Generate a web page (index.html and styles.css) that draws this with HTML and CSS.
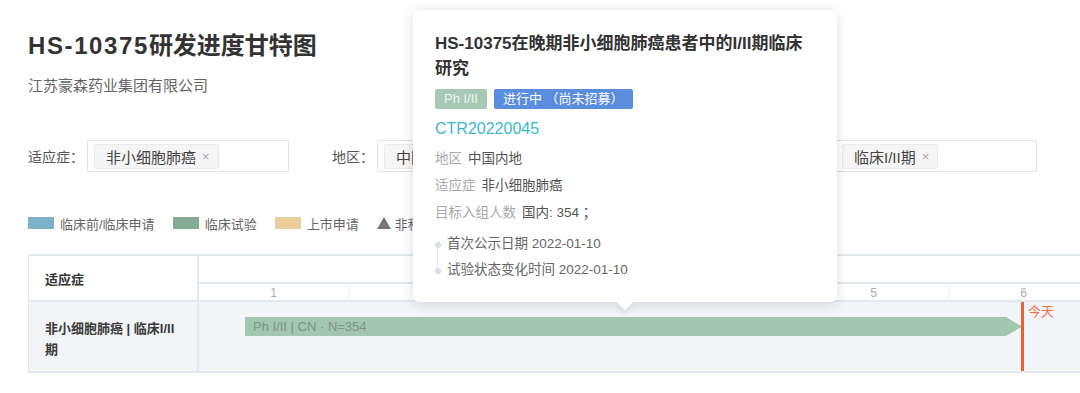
FILE: index.html
```html
<!DOCTYPE html>
<html lang="zh">
<head>
<meta charset="utf-8">
<link rel="stylesheet" href="styles.css">
</head>
<body>
<div class="page">
  <h1 class="title"><span class="latin">HS-10375</span>研发进度甘特图</h1>
  <div class="subtitle">江苏豪森药业集团有限公司</div>

  <div class="filters">
    <div class="fgroup">
      <span class="flabel">适应症：</span>
      <div class="fbox w1"><span class="tag">非小细胞肺癌<i class="x">×</i></span></div>
    </div>
    <div class="fgroup">
      <span class="flabel">地区：</span>
      <div class="fbox w2"><span class="tag">中国内地<i class="x">×</i></span></div>
    </div>
    <div class="fgroup">
      <span class="flabel">研发阶段：</span>
      <div class="fbox w1"><span class="tag">临床I/II期<i class="x">×</i></span></div>
    </div>
  </div>

  <div class="legend">
    <span class="litem"><i class="sw blue"></i>临床前/临床申请</span>
    <span class="litem"><i class="sw green"></i>临床试验</span>
    <span class="litem"><i class="sw tan"></i>上市申请</span>
    <span class="litem"><i class="tri"></i>非积极状态</span>
  </div>

  <div class="gantt">
    <div class="ghead">
      <div class="gleft hcell">适应症</div>
      <div class="gright">
        <div class="yearrow"></div>
        <div class="monthrow">
          <span class="m">1</span><span class="m">2</span><span class="m">3</span><span class="m">4</span><span class="m">5</span><span class="m">6</span><span class="m"></span>
        </div>
      </div>
    </div>
    <div class="gbody">
      <div class="gleft bcell">非小细胞肺癌 | 临床I/II期</div>
      <div class="gright track">
        <div class="bar" style="left:46px;width:777px;"><span class="bartext">Ph I/II | CN · N=354</span></div>
        <div class="today" style="left:822px;"><span class="todaytext">今天</span></div>
      </div>
    </div>
  </div>

  <div class="tooltip">
    <div class="tt-title">HS-10375在晚期非小细胞肺癌患者中的I/II期临床研究</div>
    <div class="tt-tags">
      <span class="ttag phase">Ph I/II</span>
      <span class="ttag status">进行中 （尚未招募）</span>
    </div>
    <div class="tt-id">CTR20220045</div>
    <div class="tt-row"><span class="k">地区</span><span class="v">中国内地</span></div>
    <div class="tt-row"><span class="k">适应症</span><span class="v">非小细胞肺癌</span></div>
    <div class="tt-row"><span class="k">目标入组人数</span><span class="v">国内: 354 ；</span></div>
    <div class="tt-timeline">
      <div class="tl-item first">首次公示日期 2022-01-10</div>
      <div class="tl-item">试验状态变化时间 2022-01-10</div>
    </div>
  </div>
</div>
</body>
</html>
```

FILE: styles.css
```css
* { box-sizing: border-box; }
html, body { margin: 0; padding: 0; background: #fff; }
body {
  font-family: "Liberation Sans", "Noto Sans CJK SC", sans-serif;
  color: #333;
  width: 1080px;
  height: 393px;
  overflow: hidden;
}
.page {
  position: relative;
  padding: 30px 0 0 28px;
}
.title {
  margin: 0;
  font-size: 24px;
  line-height: 32px;
  font-weight: 700;
  color: #333;
}
.latin { letter-spacing: 1.6px; }
.subtitle {
  margin-top: 14px;
  font-size: 15px;
  line-height: 20px;
  color: #666;
}
.filters {
  display: flex;
  align-items: center;
  margin-top: 44px;
  height: 32px;
}
.fgroup { display: flex; align-items: center; margin-right: 43px; }
.flabel { font-size: 14px; color: #555; margin-right: 3px; white-space: nowrap; }
.fbox {
  height: 32px;
  border: 1px solid #e2e2e2;
  border-radius: 2px;
  padding: 3px 6px;
  display: flex;
  align-items: center;
}
.w1 { width: 202px; }
.w2 { width: 342px; }
.tag {
  height: 25px;
  display: inline-flex;
  align-items: center;
  padding: 0 8px 0 11px;
  background: #f5f5f5;
  border: 1px solid #ebebeb;
  border-radius: 2px;
  font-size: 15px;
  color: #444;
}
.x { font-style: normal; color: #aaa; font-size: 13px; margin-left: 6px; }
.legend {
  display: flex;
  align-items: center;
  margin-top: 42px;
  height: 18px;
}
.litem { display: inline-flex; align-items: center; font-size: 13px; color: #666; margin-right: 18px; }
.sw { display: inline-block; width: 26px; height: 12px; margin-right: 6px; }
.blue { background: #7cb1c7; }
.green { background: #86ab95; }
.tan { background: #eccd9d; }
.tri {
  display: inline-block; width: 0; height: 0;
  border-left: 7px solid transparent; border-right: 7px solid transparent;
  border-bottom: 12px solid #777;
  margin-right: 4px;
}
.gantt {
  margin-top: 22px;
  width: 1052px;
  border-top: 2px solid #e3e9f0;
  border-bottom: 2px solid #e3e9f0;
  border-left: 1px solid #e3e9f0;
}
.ghead { display: flex; height: 46px; border-bottom: 2px solid #e3e9f0; }
.gleft {
  width: 170px;
  flex: none;
  border-right: 2px solid #e3e9f0;
  padding-left: 16px;
  font-size: 13px;
  font-weight: 700;
  color: #333;
}
.hcell { display: flex; align-items: center; }
.gright { flex: 1; position: relative; overflow: hidden; }
.yearrow { height: 28px; border-bottom: 2px solid #e3e9f0; }
.monthrow { display: flex; height: 16px; }
.m {
  flex: none;
  width: 150px;
  text-align: center;
  font-size: 12px;
  line-height: 18px;
  color: #a6adb8;
  border-right: 1px solid #eef1f5;
}
.gbody { display: flex; height: 69px; background: #f2f4f7; }
.bcell { padding-top: 16px; padding-right: 22px; line-height: 21px; color: #3a3a3a; }
.track { position: relative; }
.bar {
  position: absolute;
  top: 15px;
  height: 19px;
  background: #a3c6b1;
  clip-path: polygon(0 0, calc(100% - 16px) 0, 100% 50%, calc(100% - 16px) 100%, 0 100%);
  display: flex;
  align-items: center;
  padding-left: 8px;
}
.bartext { font-size: 13px; color: #7e9388; white-space: nowrap; }
.today {
  position: absolute;
  top: 0;
  bottom: 0;
  width: 3px;
  background: #ee5f33;
}
.todaytext {
  position: absolute;
  left: 7px;
  top: 1px;
  font-size: 13px;
  line-height: 18px;
  color: #f26c43;
  white-space: nowrap;
}
.tooltip {
  position: absolute;
  left: 413px;
  top: 10px;
  width: 424px;
  height: 292px;
  background: #fff;
  border-radius: 6px;
  box-shadow: 0 2px 12px rgba(30, 40, 60, 0.16);
  padding: 21px 22px 0 22px;
}
.tooltip::after {
  content: "";
  position: absolute;
  left: 206px;
  bottom: -6px;
  width: 12px;
  height: 12px;
  background: #fff;
  transform: rotate(45deg);
  box-shadow: 3px 3px 5px rgba(30, 40, 60, 0.08);
}
.tt-title {
  font-size: 17px;
  font-weight: 700;
  line-height: 25px;
  color: #333;
}
.tt-tags { display: flex; gap: 7px; margin-top: 8px; }
.ttag {
  height: 20px;
  line-height: 20px;
  font-size: 13px;
  padding: 0 9px;
  border-radius: 2px;
  color: #fff;
}
.phase { background: #a6c9b5; color: #eef5f0; }
.status { background: #5b8dde; }
.tt-id {
  margin-top: 8px;
  font-size: 16px;
  line-height: 24px;
  color: #3cb8d3;
}
.tt-row {
  font-size: 13.5px;
  line-height: 18px;
  margin-top: 9px;
}
.tt-row:first-of-type { margin-top: 5px; }
.k { color: #a8a8a8; margin-right: 6px; }
.v { color: #555; }
.tt-timeline { margin-top: 13px; }
.tl-item {
  position: relative;
  padding-left: 12px;
  font-size: 13.5px;
  line-height: 18px;
  color: #666;
}
.tl-item + .tl-item { margin-top: 8px; }
.tl-item::before {
  content: "";
  position: absolute;
  left: 0;
  top: 7px;
  width: 6px;
  height: 6px;
  border-radius: 50%;
  background: #d6deea;
}
.tl-item.first::after {
  content: "";
  position: absolute;
  left: 2px;
  top: 13px;
  height: 21px;
  border-left: 1px dotted #cdd6e2;
}
```
